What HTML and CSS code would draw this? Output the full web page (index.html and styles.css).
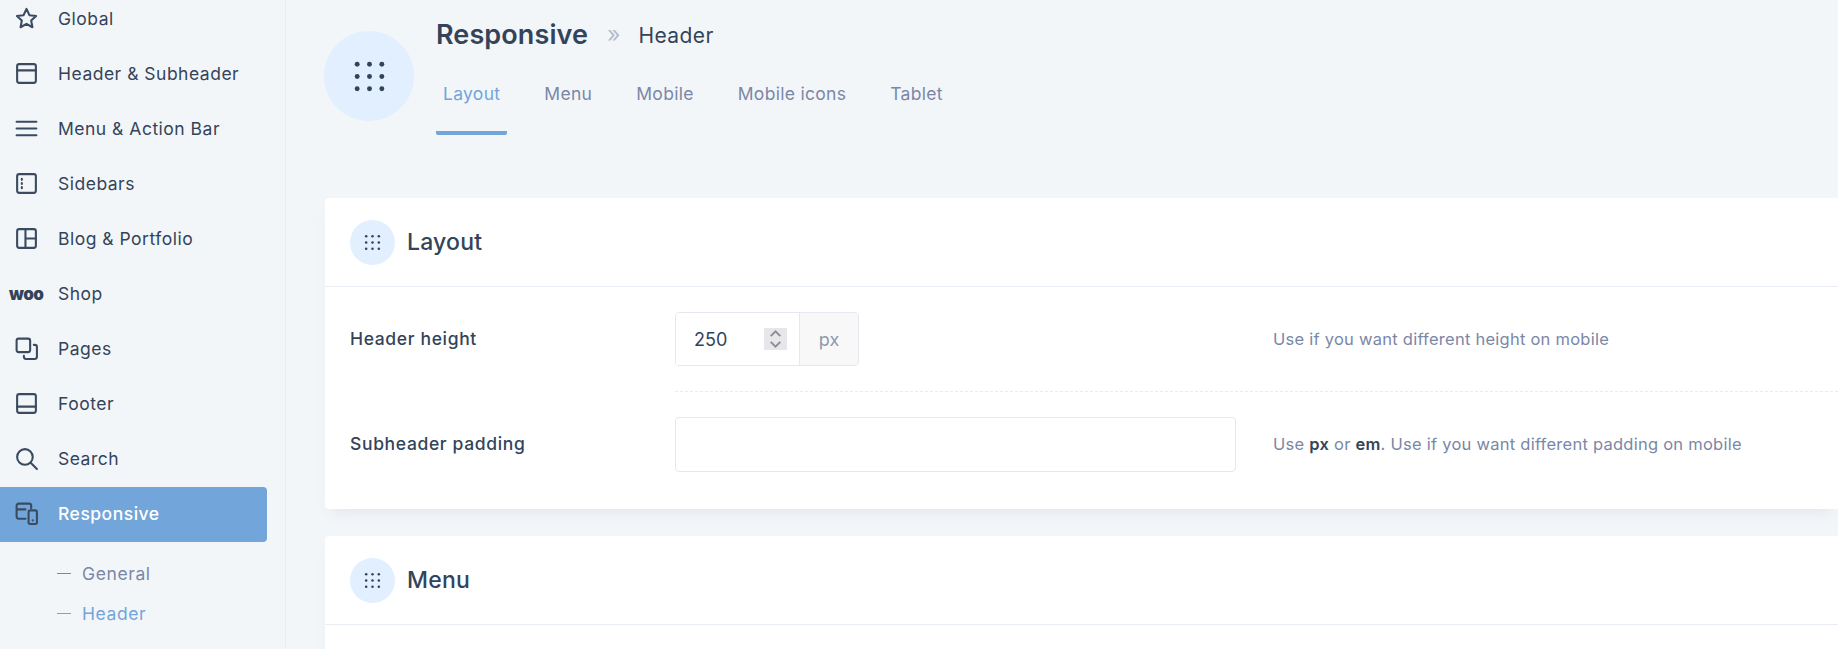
FILE: index.html
```html
<!DOCTYPE html>
<html lang="en">
<head>
    <meta charset="UTF-8">
    <title>Responsive - Header</title>
    <link rel="stylesheet" href="styles.css">
</head>
<body>
    <svg class="defs" width="0" height="0">
        <symbol id="dots" viewBox="0 0 24 24">
            <g fill="currentColor">
                <circle cx="4" cy="4" r="1.600"/><circle cx="12" cy="4" r="1.600"/><circle cx="20" cy="4" r="1.600"/>
                <circle cx="4" cy="12" r="1.600"/><circle cx="12" cy="12" r="1.600"/><circle cx="20" cy="12" r="1.600"/>
                <circle cx="4" cy="20" r="1.600"/><circle cx="12" cy="20" r="1.600"/><circle cx="20" cy="20" r="1.600"/>
            </g>
        </symbol>
    </svg>

    <div class="page">
        <aside class="sidebar">
            <nav class="side-nav">
                <a class="side-item">
                    <svg class="side-icon" viewBox="0 0 24 24"><path d="M12 2.800l2.800 6 6.400.8-4.700 4.400 1.200 6.400-5.700-3.200-5.700 3.200 1.200-6.400-4.700-4.400 6.400-.8z"/></svg>
                    <span>Global</span>
                </a>
                <a class="side-item">
                    <svg class="side-icon" viewBox="0 0 24 24"><rect x="3" y="3" width="18" height="18" rx="2"/><path d="M3 9h18"/></svg>
                    <span>Header &amp; Subheader</span>
                </a>
                <a class="side-item">
                    <svg class="side-icon" viewBox="0 0 24 24"><path d="M2.500 5.500h19M2.500 12h19M2.500 18.500h19"/></svg>
                    <span>Menu &amp; Action Bar</span>
                </a>
                <a class="side-item">
                    <svg class="side-icon" viewBox="0 0 24 24"><rect x="3" y="3" width="18" height="18" rx="2"/><path d="M7.500 7.500v1M7.500 11.500v1M7.500 15.500v1"/></svg>
                    <span>Sidebars</span>
                </a>
                <a class="side-item">
                    <svg class="side-icon" viewBox="0 0 24 24"><rect x="3" y="3" width="18" height="18" rx="2"/><path d="M11 3v18M11 12h10"/></svg>
                    <span>Blog &amp; Portfolio</span>
                </a>
                <a class="side-item">
                    <span class="woo">woo</span>
                    <span>Shop</span>
                </a>
                <a class="side-item">
                    <svg class="side-icon" viewBox="0 0 24 24"><rect x="2.500" y="2.500" width="13" height="13" rx="2"/><path d="M19 8.500h1a2 2 0 0 1 2 2V20a2 2 0 0 1-2 2h-8.500a2 2 0 0 1-2-2v-1"/></svg>
                    <span>Pages</span>
                </a>
                <a class="side-item">
                    <svg class="side-icon" viewBox="0 0 24 24"><rect x="3" y="3" width="18" height="18" rx="2"/><path d="M3 15h18"/></svg>
                    <span>Footer</span>
                </a>
                <a class="side-item">
                    <svg class="side-icon" viewBox="0 0 24 24"><circle cx="10.500" cy="10.500" r="7.500"/><path d="M16 16l6 6"/></svg>
                    <span>Search</span>
                </a>
                <a class="side-item active">
                    <svg class="side-icon" viewBox="0 0 24 24"><path d="M11 17H4.500a2 2 0 0 1-2-2V4.500a2 2 0 0 1 2-2h10a2 2 0 0 1 2 2V7M2.500 8H11"/><rect x="14" y="9" width="8" height="13" rx="1.500"/><path d="M18 18.500v.2"/></svg>
                    <span>Responsive</span>
                </a>
                <ul class="side-sub">
                    <li><span class="dash"></span>General</li>
                    <li class="current"><span class="dash"></span>Header</li>
                </ul>
            </nav>
        </aside>

        <main class="content">
            <header class="page-head">
                <div class="head-circle"><svg class="head-dots"><use href="#dots"/></svg></div>
                <div class="head-text">
                    <div class="crumbs">
                        <h1>Responsive</h1>
                        <span class="crumb-sep">»</span>
                        <span class="crumb-page">Header</span>
                    </div>
                    <div class="tabs">
                        <a class="tab active">Layout</a>
                        <a class="tab">Menu</a>
                        <a class="tab">Mobile</a>
                        <a class="tab">Mobile icons</a>
                        <a class="tab">Tablet</a>
                    </div>
                </div>
            </header>

            <section class="card">
                <div class="card-head">
                    <div class="card-circle"><svg class="card-dots"><use href="#dots"/></svg></div>
                    <h2>Layout</h2>
                </div>
                <div class="card-body">
                    <div class="row">
                        <label class="row-label">Header height</label>
                        <div class="row-field">
                            <div class="num-input">
                                <input class="num-value" type="text" value="250">
                                <span class="spinner">
                                    <svg viewBox="0 0 24 22"><path d="M7 8l5-5 5 5M7 14l5 5 5-5"/></svg>
                                </span>
                                <span class="unit">px</span>
                            </div>
                        </div>
                        <p class="row-help">Use if you want different height on mobile</p>
                    </div>
                    <div class="row row-second">
                        <label class="row-label">Subheader padding</label>
                        <div class="row-field">
                            <input class="text-input" type="text">
                        </div>
                        <p class="row-help">Use <b>px</b> or <b>em</b>. Use if you want different padding on mobile</p>
                    </div>
                </div>
            </section>

            <section class="card">
                <div class="card-head">
                    <div class="card-circle"><svg class="card-dots"><use href="#dots"/></svg></div>
                    <h2>Menu</h2>
                </div>
                <div class="card-rest"></div>
            </section>
        </main>
    </div>
</body>
</html>
```

FILE: styles.css
```css
* {
    margin: 0;
    padding: 0;
    box-sizing: border-box;
}

html, body {
    height: 100%;
    overflow: hidden;
}

body {
    font-family: "Inter", "Open Sans", sans-serif;
    background: #f3f6f9;
    color: #33445a;
}

.defs {
    display: block;
}

.page {
    display: flex;
    height: 649px;
    overflow: hidden;
}

/* sidebar */

.sidebar {
    width: 286px;
    flex: none;
    border-right: 1px solid #e8edf3;
    overflow: hidden;
}

.side-nav {
    margin-top: -8px;
    padding-right: 18px;
}

.side-item {
    display: flex;
    align-items: center;
    height: 55px;
    padding-left: 14px;
    padding-bottom: 2px;
    font-size: 17.500px;
    letter-spacing: 0.5px;
}

.side-item span:last-child {
    margin-left: 19px;
}

.side-item.active {
    background: #72a5d9;
    color: #fff;
    border-radius: 0 4px 4px 0;
    font-weight: 500;
}

.side-icon {
    width: 25px;
    height: 25px;
    flex: none;
    fill: none;
    stroke: #3a4b60;
    stroke-width: 2;
    stroke-linecap: round;
    stroke-linejoin: round;
}

.woo {
    width: 25px;
    flex: none;
    margin-left: -5px;
    margin-right: 5px;
    font-size: 17px;
    font-weight: 900;
    letter-spacing: -0.5px;
    color: #33445a;
}

.side-sub {
    list-style: none;
    padding-top: 13px;
}

.side-sub li {
    display: flex;
    align-items: center;
    height: 40px;
    padding-left: 57px;
    padding-bottom: 4px;
    font-size: 17.500px;
    letter-spacing: 0.6px;
    color: #7a87a6;
}

.side-sub .current {
    color: #72a5d9;
}

.dash {
    width: 14px;
    height: 1px;
    margin-right: 11px;
    background: currentColor;
}

/* main */

.content {
    flex: 1;
    min-width: 0;
    padding-left: 38px;
    overflow: hidden;
}

.page-head {
    display: flex;
    gap: 22px;
    height: 198px;
}

.head-circle {
    display: flex;
    align-items: center;
    justify-content: center;
    width: 90px;
    height: 90px;
    margin-top: 31px;
    flex: none;
    border-radius: 50%;
    background: #e1efff;
    color: #33445a;
}

.head-dots {
    width: 37px;
    height: 37px;
}

.crumbs {
    display: flex;
    align-items: center;
    height: 68px;
}

h1 {
    font-size: 27px;
    font-weight: 600;
    letter-spacing: 0.1px;
}

.crumb-sep {
    margin: 0 18px 0 19px;
    font-size: 23px;
    color: #b4bcc8;
}

.crumb-page {
    padding-top: 2px;
    font-size: 21px;
    letter-spacing: 0.4px;
}

.tabs {
    display: flex;
    gap: 30px;
    margin-top: -5px;
}

.tab {
    height: 72px;
    padding: 20px 7px 0;
    border-bottom: 4px solid transparent;
    border-radius: 0 0 2px 2px;
    font-size: 17.500px;
    letter-spacing: 0.3px;
    color: #7a87a6;
}

.tab.active {
    color: #72a5d9;
    border-bottom-color: #72a5d9;
}

.card {
    margin-bottom: 27px;
    margin-left: 1px;
    background: #fff;
    border-radius: 4px 0 0 4px;
    box-shadow: 0 8px 14px -6px rgba(60, 80, 110, 0.10);
}

.card-head {
    display: flex;
    align-items: center;
    gap: 12px;
    height: 89px;
    padding-left: 25px;
    border-bottom: 1px solid #e9edf4;
}

.card-circle {
    display: flex;
    align-items: center;
    justify-content: center;
    width: 45px;
    height: 45px;
    border-radius: 50%;
    background: #e1efff;
    color: #33445a;
}

.card-dots {
    width: 19px;
    height: 19px;
}

h2 {
    font-size: 23px;
    font-weight: 500;
    letter-spacing: 0.2px;
}

.card-body {
    padding: 25px 0 37px 25px;
}

.card-rest {
    height: 80px;
}

.row {
    display: grid;
    grid-template-columns: 325px 561px 1fr;
    align-items: center;
}

.row-field {
    display: flex;
}

/* dashed divider starts at the field column */
.row-second {
    position: relative;
    margin-top: 51px;
}

.row-second::before {
    content: "";
    position: absolute;
    left: 325px;
    right: 0;
    top: -26px;
    border-top: 1px dashed #e8ebf0;
}

.row-second .row-field {
    height: 55px;
}

.row-second .row-help {
    padding-bottom: 2px;
}

.row-label {
    padding-bottom: 2px;
    font-size: 17.500px;
    font-weight: 500;
    letter-spacing: 0.65px;
}

.num-input {
    display: flex;
    align-items: center;
    width: 184px;
    height: 54px;
    border: 1px solid #e5e8ee;
    border-radius: 4px;
    overflow: hidden;
}

.num-value {
    width: 88px;
    height: 100%;
    flex: none;
    padding-left: 18px;
    border: none;
    outline: none;
    font: inherit;
    font-size: 18px;
    color: #33445a;
}

.spinner {
    display: flex;
    width: 23px;
    height: 22px;
    flex: none;
    background: #e6e6eb;
}

.spinner svg {
    width: 23px;
    height: 22px;
    fill: none;
    stroke: #8d8d96;
    stroke-width: 2;
}

.unit {
    display: flex;
    align-items: center;
    justify-content: center;
    width: 59px;
    height: 100%;
    margin-left: 12px;
    background: #f8f8f9;
    border-left: 1px solid #e5e8ee;
    font-size: 18px;
    color: #8f98ad;
}

.text-input {
    width: 561px;
    height: 55px;
    border: 1px solid #e5e8ee;
    border-radius: 4px;
    outline: none;
}

.row-help {
    padding-left: 37px;
    font-size: 16.500px;
    letter-spacing: 0.25px;
    color: #7a87a6;
}

.row-help b {
    font-weight: 600;
    color: #33445a;
}
```
